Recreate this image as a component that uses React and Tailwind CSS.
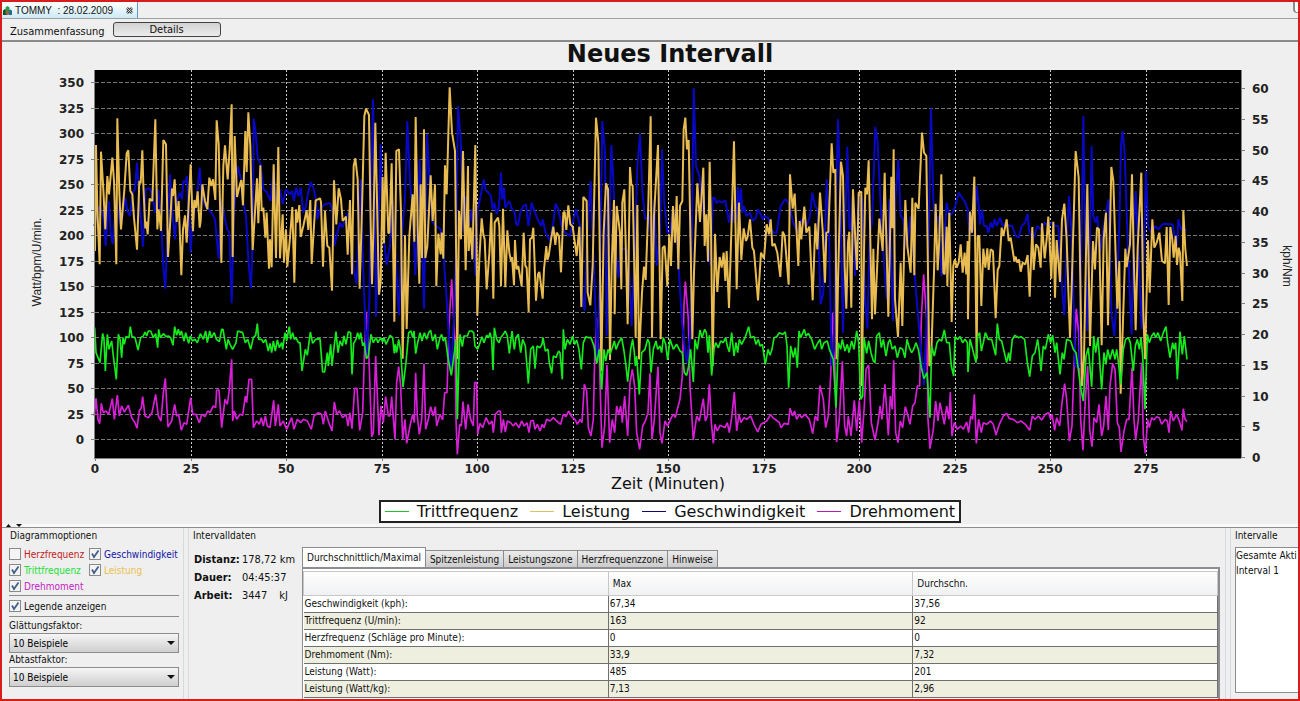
import { useState } from "react";

// Samples are stored in thirds of a pixel: [x offset, "x,y x,y ..."]
const cadence = [
  [0, "14,785 18,860 30,890 38,802 42,820 46,915 52,805 57,850 65,825 70,870 79,940 85,805 90,820 95,875 99,815 103,835 108,812 117,815 121,782 126,812 135,815 144,852 152,815 160,810 165,798 170,810 175,795 182,795 190,815 197,803 203,845 206,790 211,815 220,803 228,812 235,810 242,815 249,838 254,782 260,808 265,790 270,808 274,795 282,825 287,800 296,832 301,810 307,825 315,820 322,830 331,803 340,820 347,795 352,830 359,795 364,815 373,800 379,820 388,827 395,790 399,790 409,850 414,820 420,835 428,850 438,830 443,795 458,800 466,830 473,820 482,850 490,815 497,808 502,773 506,820 515,820 520,830 527,820 535,855 540,832 545,860 550,825 556,855 562,822 568,845 575,830 578,850 585,800 590,825 595,795 598,782 602,820 608,800 613,820 618,815 625,830 630,830 636,915 646,850 652,868 661,798 668,832 677,820 690,818 698,918 704,918 712,860 715,900 722,835 726,900 732,845 738,797 744,860 750,825 757,840 762,810 768,835 775,797 782,800 786,925 791,832 798,820 803,800 808,820 812,800 818,840 823,830 829,878 835,870 843,805 850,830 858,815 864,830 872,815 878,828 882,815 888,835"],
  [870, "30,808 38,815 43,862 46,835 50,860 56,820 62,855 69,963 78,890 86,800 93,795 98,815 102,795 107,863 113,830 120,800 126,825 133,800 140,820 146,800 152,793 158,825 166,805 172,850 180,815 185,805 190,825 196,815 203,870 214,928 223,860 228,820 232,1060 238,840 240,805 247,842 252,810 262,810 268,795 275,795 281,800 285,840 293,850 300,830 306,812 312,830 320,808 326,815 330,800 335,820 339,912 343,785 350,820 357,830 362,815 370,805 376,795 382,810 388,862 396,795 403,850 408,815 415,805 422,860 428,820 436,840 445,952 452,850 460,840 465,908 471,840 480,845 486,835 489,815 496,855 504,850 508,890 515,922 520,870 528,875 536,855 540,860 547,940 550,790 555,850 562,820 570,835 578,810 584,835 590,822 597,850 604,910 610,830 618,812 625,815 633,815 642,840 650,893 658,850 665,970 672,850 677,885 684,850 690,865 697,845 703,825 708,850 716,830 725,815 732,855 738,900 743,947 752,850 758,820 763,860 766,900 770,870 778,985 785,860 795,850 803,820 808,830 813,920 820,850 828,825 833,850 840,840 845,860 850,815 857,835 863,882"],
  [1740, "0,820 10,850 20,835 30,855 37,860 43,920 50,928 56,900 62,850 70,948 75,820 82,850 90,792 96,815 104,790 109,800 114,860 118,808 125,928 132,850 137,830 145,845 152,825 160,830 167,815 172,840 178,858 185,800 192,870 198,830 203,860 208,820 215,835 225,815 236,782 242,815 252,812 258,835 265,820 270,840 277,835 286,895 294,850 300,868 306,850 312,815 320,812 328,800 338,805 346,798 351,840 356,965 362,840 370,875 376,845 382,905 387,795 392,815 403,790 408,810 415,802 425,820 434,850 441,835 450,820 455,850 462,830 472,825 478,850 490,880 498,1025 505,830 512,850 517,820 525,855 532,835 537,860 545,825 552,850 560,795 566,830 572,1000 578,990 582,815 590,862 596,825 603,860 610,885 615,890 620,810 628,800 634,845 640,820 648,870 655,830 660,820 667,850 675,840 682,875 690,845 698,850 705,875 711,820 718,845 725,860 731,850 738,830 745,850 754,905 762,938 771,920 780,1055 785,840 793,870 801,830 808,820 815,825 823,792 830,830 838,830 844,900 851,930 855,812 863,820 870,812 878,830 885,820 892,830"],
  [2580, "54,918 60,820 68,850 78,890 83,810 89,800 94,855 100,830 106,800 115,820 125,820 137,868 142,773 148,820 155,825 162,855 170,890 176,860 180,885 187,820 195,808 205,815 213,812 224,820 232,890 239,932 247,870 255,860 263,820 267,850 273,915 280,840 286,850 295,805 302,830 308,808 315,860 320,830 330,925 337,860 342,880 350,820 362,825 370,850 378,860 385,910 393,970 400,1005 408,870 415,845 425,962 431,810 437,860 444,815 448,870 455,970 462,860 468,895 473,850 480,880 488,850 495,880 500,850 505,885 512,955 520,850 527,820 535,815 541,830 550,915 556,840 562,820 568,850 573,815 578,870 585,1030 592,805 598,830 605,810 612,800 617,815 624,800 632,825 640,800 648,782 653,830 660,875 668,830 672,850 677,830 682,940 690,797 697,865 703,810 711,880"],
];

const power = [
  [0, "15,555 18,237 22,430 29,595 33,257 40,370 46,490 52,330 57,385 67,275 72,345 79,595 82,157 88,380 93,490 103,372 110,262 115,253 121,375 127,385 132,455 141,551 148,345 152,352 157,253 160,357 166,487 169,467 173,505 179,398 187,405 196,160 202,490 206,430 213,495 220,222 228,235 234,573 240,480 246,368 249,390 254,340 260,468 266,405 274,628 279,490 285,448 290,530 297,395 302,295 309,496 313,402 318,425 323,376 329,485 332,465 337,355 345,405 352,430 358,335 364,360 369,340 376,402 380,163 386,235 394,591 400,300 405,238 413,340 419,250 425,115 428,573 434,210 441,393 450,355 454,342 459,418 466,195 470,318 475,139 481,240 488,552 494,455 501,337 505,472 511,298 515,435 520,425 526,515 530,440 537,608 540,520 545,604 551,295 558,576 565,243 570,577 578,445 582,590 588,490 592,602 600,515 607,423 613,650 618,430 622,470 628,417 632,513 640,480 650,433 655,492 661,402 665,594 672,480 677,403 690,397 693,408 699,602 705,435 712,540 718,545 726,674 732,343 739,475 746,367 753,400 758,465 768,452 773,566 780,402 786,625 791,300 796,277 803,340 809,668 816,430 823,150 828,128 837,147 841,420 846,655 850,500 856,170 862,450 867,686 872,650 878,333 882,532 887,260 895,502"],
  [870, "28,500 35,292 43,767 49,255 57,250 63,440 68,878 75,508 80,789 88,510 98,385 103,527 107,153 113,480 118,653 122,355 126,576 132,190 136,576 142,540 152,328 158,465 165,355 169,661 175,503 182,565 185,500 190,578 195,298 200,385 209,64 216,200 225,255 232,880 237,435 243,520 249,255 257,613 264,300 266,555 272,485 277,580 286,237 292,749 298,580 305,457 310,505 314,520 320,670 328,563 334,440 340,698 344,470 354,455 358,480 363,661 369,428 376,664 382,493 388,560 393,585 396,573 402,658 405,522 410,610 415,600 425,661 431,500 436,600 440,605 446,738 450,520 456,515 460,485 468,704 474,625 478,618 488,698 492,610 499,540 502,582 506,570 514,515 520,482 526,537 530,500 537,510 543,619 550,440 554,438 559,492 565,418 571,475 578,482 590,570 598,482 604,723 610,393 620,405 623,680 631,718 638,600 648,155 655,230 664,915 671,500 678,352 684,370 690,882 695,600 702,402 704,745 710,420 720,500 724,670 727,410 733,370 743,775 750,303 754,355 758,360 767,815 772,417 777,880 786,680 792,602 797,642 804,450 812,151 816,815 822,450 834,237 842,820 848,545 854,540 862,660 868,505"],
  [1740, "3,600 9,420 15,530 20,390 25,610 30,420 37,405 41,190 46,155 51,250 56,222 67,820 72,620 82,352 90,468 100,305 104,540 109,445 114,585 119,287 123,480 128,900 135,503 142,678 149,573 155,605 161,560 166,645 170,555 177,726 184,500 192,226 200,670 207,410 214,582 221,487 228,525 233,512 240,460 247,545 252,555 264,703 273,560 282,578 290,475 297,505 302,460 307,540 314,533 322,560 331,633 338,497 344,510 356,656 360,325 368,428 374,383 385,600 389,465 394,520 403,422 409,500 418,482 428,703 436,472 442,550 450,380 458,492 465,650 469,500 475,498 485,232 490,320 496,310 500,880 504,650 513,287 519,330 524,600 529,728 534,530 538,497 544,725 549,370 556,520 561,612 566,380 574,377 575,960 582,560 586,365 591,385 596,283 606,760 610,548 615,745 628,458 638,555 644,320 655,752 664,332 667,487 671,250 675,700 684,813 692,590 697,780 706,402 712,540 722,620 727,395 733,628 736,410 746,428 756,200 762,260 769,270 778,900 783,890 792,620 797,413 803,613 808,520 814,325 820,620 824,625 830,482 832,660 838,440 845,768 850,600 855,580 860,605 866,590 872,535 878,620 884,560 889,625 893,525"],
  [2580, "54,760 60,437 66,500 73,332 80,880 83,510 88,510 94,720 100,548 106,605 112,547 116,612 122,550 129,555 137,757 143,612 148,600 155,485 160,510 164,490 170,460 176,525 182,515 193,585 197,572 202,590 207,580 212,617 218,590 226,595 233,567 239,692 247,483 251,612 258,535 265,545 272,605 276,472 284,577 290,520 295,452 304,638 310,467 315,695 320,522 330,648 336,460 343,413 350,520 360,815 366,630 377,255 386,335 396,960 402,880 412,355 420,840 429,525 435,610 441,485 447,490 455,838 461,520 468,440 474,778 484,303 490,345 502,728 508,585 512,983 526,548 530,603 540,535 546,325 551,560 557,793 563,545 574,320 580,740 585,880 594,523 599,680 607,460 613,545 620,530 628,500 636,585 645,592 650,483 656,717 661,483 667,520 671,575 677,510 681,597 686,545 690,560 697,705 700,433 706,550 711,600"],
];

const speed = [
  [0, "13,480 28,420 40,450 47,540 57,405 62,500 68,535 78,400 92,480 106,395 112,435 120,450 128,380 135,370 141,290 150,430 159,542 167,370 178,367 185,380 196,440 205,370 214,480 220,600 226,668 232,500 240,325 247,440 255,520 262,400 270,380 276,400 280,345 286,350 291,330 296,430 302,560 308,460 320,400 329,305 334,375 345,420 354,428 368,445 375,460 386,578 395,400 404,455 412,490 418,500 425,712 432,440 443,300 452,335 458,400 468,450 475,580 483,667 489,500 491,158 497,200 503,275 512,295 520,370 530,378 542,405 550,320 560,410 570,370 578,415 588,370 600,385 606,375 612,405 618,365 626,390 632,365 640,440 648,420 655,378 662,348 670,365 677,395 682,460 692,425 705,415 720,411 727,430 733,540 742,500 750,470 757,485 766,460 775,440 782,480 790,600 800,655 806,500 812,340 818,560 830,875 838,700 843,400 849,100 852,250 858,752 865,480 872,235 878,480 890,597"],
  [870, "30,540 38,400 48,600 57,748 66,500 75,400 82,165 90,350 98,430 106,628 112,480 119,280 124,450 132,728 136,500 141,205 148,330 157,467 168,480 182,490 190,560 200,700 213,920 222,760 228,550 234,120 242,220 252,500 258,390 266,480 275,430 280,500 287,630 293,430 300,400 311,340 317,372 325,380 333,390 338,430 343,410 350,445 357,420 363,320 367,400 372,365 376,425 388,405 395,428 404,440 409,475 414,478 422,435 430,420 438,415 445,480 455,410 465,440 475,465 484,480 488,460 497,500 510,525 520,470 527,413 535,430 545,480 555,500 570,510 578,470 588,430 600,480 607,690 614,735 622,500 632,345 640,560 652,880 660,600 667,165 675,260 680,810 688,500 694,237 700,340 707,560 716,635 722,550 735,550 745,560 755,780 765,550 772,300 780,205 787,370 795,460 808,450 816,550 823,400 830,600 840,500 846,250 852,400 862,500"],
  [1740, "0,500 10,430 20,500 27,620 36,770 50,890 60,810 66,500 71,66 78,300 88,330 95,400 105,480 115,540 122,600 128,395 134,395 139,412 146,405 155,410 166,403 177,470 185,420 193,470 200,450 203,362 208,420 213,368 217,440 222,420 229,450 240,440 248,465 258,455 263,430 270,440 278,460 285,450 296,458 300,480 310,500 320,500 332,420 345,400 355,410 370,470 383,500 395,460 410,480 420,450 427,380 435,420 443,430 452,715 460,680 470,340 477,500 485,900 492,850 498,400 504,160 510,340 519,800 525,500 532,242 538,490 543,490 548,390 555,630 563,500 570,390 577,400 585,700 592,788 600,500 606,470 616,183 623,230 630,380 640,560 650,700 658,400 669,765 676,400 685,280 692,450 700,460 710,550 722,450 733,610 744,750 762,958 772,700 778,400 783,127 790,400 797,470 805,450 815,630 823,520 830,410 838,450 848,440 856,420 866,380 876,395 886,410 893,430"],
  [2580, "58,500 66,500 73,480 80,360 86,420 90,475 96,430 102,480 110,480 115,500 122,470 128,485 134,460 140,480 150,455 158,480 168,470 178,480 187,480 197,510 206,515 215,480 225,470 233,443 238,500 250,520 262,480 272,490 285,470 295,480 305,470 315,480 325,480 335,650 343,748 350,540 357,390 365,500 376,900 388,905 395,500 400,150 405,480 412,795 419,560 425,240 430,450 437,470 442,450 450,560 460,490 468,440 476,400 484,740 493,810 500,700 508,480 513,240 518,195 524,260 530,440 540,700 545,805 551,500 557,375 563,500 575,790 581,560 588,315 594,480 605,500 615,480 625,490 640,473 658,475 668,475 672,500 681,540 685,460 690,480 700,500 709,490"],
];

const torque = [
  [0, "13,1050 18,997 24,1060 29,1073 34,1012 40,1040 48,1035 56,1045 67,998 73,1060 82,987 88,1050 95,1020 103,1038 115,1018 125,1055 135,1070 141,1087 148,1035 154,1025 158,992 165,1050 175,1055 186,1040 197,985 205,1050 213,1065 220,980 226,937 234,1083 245,1065 254,1015 260,1050 266,1045 274,1093 282,1070 290,1075 302,995 308,1045 318,1045 328,1070 335,1045 345,1052 353,1035 360,1040 370,1020 377,1025 380,972 387,972 395,1085 405,1000 412,1015 418,970 425,880 428,1065 433,1035 440,1060 450,1045 458,1048 466,990 470,1010 477,940 485,940 490,1085 500,1065 508,1075 514,1055 520,1080 526,1050 532,1080 540,1085 551,1003 556,1080 565,1015 570,1080 580,1065 590,1090 605,1055 612,1090 622,1060 632,1070 640,1060 652,1065 664,1090 672,1050 685,1040 695,1045 700,1075 706,1035 715,1065 726,1095 733,1008 740,1045 748,1035 758,1055 768,1045 774,1080 780,1040 786,1088 794,967 801,967 809,1093 818,1040 823,870 829,737 837,880 845,1112 850,1100 857,870 867,1108 873,1020 880,1070 887,992 895,1050"],
  [870, "30,1050 35,992 45,1120 50,950 56,902 62,960 68,1120 75,1060 80,1132 90,1080 98,1045 103,1070 107,920 112,1050 118,1105 125,1060 132,893 137,1090 145,1060 152,1022 160,1050 166,1022 170,1080 180,1045 188,1062 194,980 201,980 207,780 215,640 225,830 228,1060 232,1165 239,1075 244,1080 249,1007 257,1090 264,1015 272,1060 280,1080 284,950 290,950 293,1105 300,1072 308,1085 318,1055 328,1075 336,1065 340,1100 346,1045 355,1035 361,1035 364,1100 370,1060 376,1098 382,1065 392,1070 400,1080 407,1070 417,1085 425,1065 433,1080 441,1070 447,1100 452,1065 460,1063 465,1090 472,1075 480,1095 487,1075 492,1085 500,1060 510,1065 520,1055 530,1065 542,1075 550,1045 558,1052 566,1035 575,1052 585,1060 592,1075 600,1060 606,1070 613,955 620,975 625,1085 633,1110 640,1060 644,880 650,755 658,880 666,1145 674,1080 681,897 689,1130 697,1060 704,1100 710,1020 716,1045 722,1020 727,1070 734,990 743,1110 750,950 757,910 764,960 770,1100 779,1150 788,1080 796,1065 804,1040 810,922 816,1120 823,1060 834,902 840,1100 846,1132 855,1065 863,1080"],
  [1740, "4,1055 10,1045 16,1055 22,1030 30,1000 37,930 42,720 46,647 55,760 60,960 70,1122 80,1050 88,1065 94,1030 100,998 106,1065 112,1050 118,955 124,1070 130,1132 135,1075 142,1095 150,1078 165,1085 172,1070 178,1100 185,1055 193,978 200,1095 207,1045 213,1070 222,1055 230,1060 242,1050 252,1075 263,1098 273,1075 290,1065 302,1045 308,1055 318,1062 328,1070 333,1085 343,1072 355,1075 360,1027 368,1050 374,1035 380,1060 388,1045 395,1055 405,1045 418,1060 428,1103 436,1050 443,1065 450,958 460,1000 467,1085 475,1050 482,930 488,740 494,860 500,1128 508,1060 517,886 524,1080 530,1110 535,1050 543,1110 553,1003 560,1095 568,1003 575,1130 583,1020 588,910 596,897 604,1070 615,1122 625,1065 630,1020 636,1060 645,955 655,1108 661,990 667,1030 671,883 677,1100 684,1130 691,1065 698,1085 706,1022 714,1050 720,1075 728,1020 735,1010 742,960 749,960 754,760 761,625 770,760 774,1060 780,1148 790,1090 797,1005 804,1065 810,1010 817,1045 823,1075 830,1020 837,1060 841,978 846,1110 853,1070 862,1090 872,1080 880,1090 890,1068"],
  [2580, "56,1100 62,1050 68,1060 73,985 79,1132 86,1060 94,1100 100,1070 110,1075 122,1065 130,1075 138,1107 148,1075 160,1050 170,1042 178,1058 190,1060 202,1070 213,1065 226,1075 239,1093 247,1050 255,1060 265,1050 275,1062 286,1045 296,1040 302,1060 306,1045 314,1093 320,1055 329,1080 336,1010 344,953 350,1000 358,1125 366,1080 370,960 379,728 386,800 392,1060 399,1153 406,1000 413,900 419,1090 426,1142 432,1055 440,1070 447,1015 455,1110 461,1080 468,990 475,1092 480,960 488,893 495,910 502,1070 508,1085 513,1158 522,1095 530,1060 537,1060 546,905 552,1060 557,1120 565,1060 575,890 580,1110 586,1162 593,1060 598,1085 605,1055 612,1062 620,1052 628,1055 635,1075 646,1060 652,1065 657,1100 662,1035 670,1065 680,1045 688,1065 696,1093 700,1028 705,1060 711,1067"],
];

// Painted in this order, so cadence ends up on top
const series = [
  { key: "torque", color: "#d81fd8", width: 5, data: torque },
  { key: "speed", color: "#0808c4", width: 6, data: speed },
  { key: "power", color: "#e8bc50", width: 6, data: power },
  { key: "cadence", color: "#14ea1c", width: 5, data: cadence },
];

const legend = [
  { key: "cadence", label: "Trittfrequenz", line: "bg-[#1fc42c]" },
  { key: "power", label: "Leistung", line: "bg-[#e2c060]" },
  { key: "speed", label: "Geschwindigkeit", line: "bg-[#0a0a70]" },
  { key: "torque", label: "Drehmoment", line: "bg-[#b81cb8]" },
];

const leftTicks = [350, 325, 300, 275, 250, 225, 200, 175, 150, 125, 100, 75, 50, 25, 0];
const rightTicks = [60, 55, 50, 45, 40, 35, 30, 25, 20, 15, 10, 5, 0];
const timeTicks = [0, 25, 50, 75, 100, 125, 150, 175, 200, 225, 250, 275];

const leftY = (v) => Math.round(373 - (v * 357) / 350);
const rightY = (v) => Math.round(391 - (v * 369) / 60);
const timeX = (v) => Math.round(93 + (v * 1051) / 275);

const toPoints = (segments) =>
  segments
    .flatMap(([offset, text]) =>
      text.split(" ").map((pair) => {
        const [x, y] = pair.split(",").map(Number);
        return `${x + offset},${y}`;
      })
    )
    .join(" ");

const rows = [
  ["Geschwindigkeit (kph):", "67,34", "37,56"],
  ["Trittfrequenz (U/min):", "163", "92"],
  ["Herzfrequenz (Schläge pro Minute):", "0", "0"],
  ["Drehmoment (Nm):", "33,9", "7,32"],
  ["Leistung (Watt):", "485", "201"],
  ["Leistung (Watt/kg):", "7,13", "2,96"],
];

const tabs = [
  "Durchschnittlich/Maximal",
  "Spitzenleistung",
  "Leistungszone",
  "Herzfrequenzzone",
  "Hinweise",
];

function Chart({ visible }) {
  return (
    <svg
      viewBox="0 0 1296 426"
      className="block w-full h-auto"
      role="img"
      aria-label="Neues Intervall"
    >
      <rect x="92" y="4" width="1147" height="388" fill="#000" />

      {/* Grid */}
      <g stroke="#c8c8c8" strokeOpacity="0.6" shapeRendering="crispEdges">
        {leftTicks.map((v) => (
          <line key={v} x1="93" x2="1238" y1={leftY(v)} y2={leftY(v)} strokeDasharray="4 2" />
        ))}
        {timeTicks.slice(1).map((v) => (
          <line key={v} x1={timeX(v)} x2={timeX(v)} y1="4" y2="392" strokeDasharray="2 2" stroke="#fff" strokeOpacity="0.8" />
        ))}
      </g>

      {/* Series */}
      <g transform="translate(88 0) scale(0.33333)" fill="none" strokeLinejoin="bevel">
        {series
          .filter((s) => visible[s.key])
          .map((s) => (
            <polyline key={s.key} points={toPoints(s.data)} stroke={s.color} strokeWidth={s.width} />
          ))}
      </g>

      {/* Axes */}
      <g stroke="#808080" shapeRendering="crispEdges">
        <line x1="92" x2="92" y1="4" y2="392" />
        <line x1="1239" x2="1239" y1="4" y2="392" />
        <line x1="92" x2="1239" y1="392" y2="392" />
        {leftTicks.map((v) => (
          <line key={v} x1="89" x2="92" y1={leftY(v)} y2={leftY(v)} />
        ))}
        {rightTicks.map((v) => (
          <line key={v} x1="1239" x2="1243" y1={rightY(v)} y2={rightY(v)} />
        ))}
        {timeTicks.map((v) => (
          <line key={v} x1={timeX(v)} x2={timeX(v)} y1="392" y2="395" />
        ))}
      </g>

      <g className="font-['DejaVu_Sans',sans-serif] text-[12px] font-bold" fill="#222">
        {leftTicks.map((v) => (
          <text key={v} x="82" y={leftY(v) + 5} textAnchor="end">
            {v}
          </text>
        ))}
        {rightTicks.map((v) => (
          <text key={v} x="1250" y={rightY(v) + 5}>
            {v}
          </text>
        ))}
        {timeTicks.map((v) => (
          <text key={v} x={timeX(v)} y="407" textAnchor="middle">
            {v}
          </text>
        ))}
      </g>

      <text
        x="666"
        y="423"
        textAnchor="middle"
        fill="#111"
        className="font-['DejaVu_Sans',sans-serif] text-[16px]"
      >
        Zeit (Minuten)
      </text>
      <g
        fill="#222"
        textAnchor="middle"
        className="font-['Liberation_Sans',sans-serif] text-[12px]"
      >
        <text transform="translate(39 196) rotate(-90)">Watt/bpm/U/min.</text>
        <text transform="translate(1281 200) rotate(90)">kph/Nm</text>
      </g>
    </svg>
  );
}

function Check({ label, color, checked, onChange }) {
  return (
    <label className={`flex items-center gap-[3px] h-4 whitespace-nowrap ${color}`}>
      <span className="relative block size-3 shrink-0">
        <input
          type="checkbox"
          checked={checked}
          onChange={onChange}
          className="block size-3 appearance-none border border-[#8a8a8a] bg-[#f4f4f4]"
        />
        {checked && (
          <svg viewBox="0 0 12 12" className="absolute inset-0 size-3 pointer-events-none">
            <path d="M3 5.5 L5 9 L9.5 2.5" fill="none" stroke="#44608f" strokeWidth="1.8" />
          </svg>
        )}
      </span>
      {label}
    </label>
  );
}

function Factor({ id, label }) {
  return (
    <div>
      <label htmlFor={id} className="block h-[14px] leading-[14px]">
        {label}
      </label>
      <div className="relative">
        <select
          id={id}
          className="block w-full h-5 appearance-none border border-[#8c8c8c] bg-linear-to-b from-[#f5f5f5] to-[#cfcfcf] px-[3px] text-black"
        >
          <option>10 Beispiele</option>
        </select>
        <svg viewBox="0 0 8 4" className="absolute right-1 top-2 h-1 w-2 pointer-events-none">
          <path d="M0 0h8L4 4z" fill="#111" />
        </svg>
      </div>
    </div>
  );
}

export default function App() {
  const [tab, setTab] = useState(0);
  const [heart, setHeart] = useState(false);
  const [showLegend, setShowLegend] = useState(true);
  const [visible, setVisible] = useState({
    cadence: true,
    power: true,
    speed: true,
    torque: true,
  });

  const toggle = (key) => setVisible((prev) => ({ ...prev, [key]: !prev[key] }));

  return (
    <div className="min-h-screen flex flex-col overflow-hidden border-2 border-[#d81c1c] bg-[#efefef] text-[#111] font-['DejaVu_Sans_Condensed','DejaVu_Sans',sans-serif] text-[10px]">
      {/* Document tabs */}
      <header className="flex h-[17px] items-start justify-between border-b border-[#a0a0a0]">
        <div className="flex h-4 w-[136px] items-center border-r border-[#5b9bc8] bg-linear-to-b from-white to-[#cdeaf7] pl-px font-['Liberation_Sans',sans-serif] text-[10px]">
          <svg viewBox="0 0 9 9" className="mr-[3px] size-[9px]">
            <path d="M0 4.5L2 3l2 1.5V9H0z" fill="#14502c" />
            <path d="M2.5 1.5L4.5 0l2 1.5V8h-4z" fill="#2a9a46" />
            <path d="M5.5 4.5L7.2 3.5 9 4.5V9H5.5z" fill="#2b6c8c" />
            <path d="M3.5 5h2v4h-2z" fill="#b85a3a" />
          </svg>
          <span className="whitespace-pre">TOMMY  : 28.02.2009</span>
          <button type="button" aria-label="Schließen" className="ml-auto mr-1">
            <svg viewBox="0 0 7 7" className="size-[7px]">
              <path d="M1 1l5 5M6 1L1 6" stroke="#444" strokeWidth="2.6" />
              <path d="M1 1l5 5M6 1L1 6" stroke="#eee" strokeWidth="0.8" />
            </svg>
          </button>
        </div>
        <div className="h-[11px] w-[5px] rounded-bl-sm border-b border-l-2 border-[#8c8c8c] bg-white" />
      </header>

      {/* View switch */}
      <nav className="flex h-[23px] items-center gap-2 border-b-2 border-[#8a8a8a] pl-2 text-[11px]">
        <button type="button" className="self-end">
          Zusammenfassung
        </button>
        <button
          type="button"
          className="h-[15px] w-[108px] rounded-[3px] border border-[#444] bg-linear-to-b from-[#d2d2d2] to-[#ececec] leading-[14px]"
        >
          Details
        </button>
      </nav>

      <main className="pb-px">
        <h1 className="h-6 pl-10 text-center font-['DejaVu_Sans',sans-serif] text-[24px] font-bold leading-6">
          Neues Intervall
        </h1>
        <Chart visible={visible} />
        <div className="flex h-[31px] items-end justify-center pl-10">
          {showLegend && (
            <ul className="flex h-[23px] items-center gap-3 border-2 border-[#222] bg-white px-1 font-['DejaVu_Sans',sans-serif] text-[16px]">
              {legend.map((item) => (
                <li key={item.key} className="flex items-center gap-2">
                  <span className={`h-px w-6 ${item.line}`} />
                  {item.label}
                </li>
              ))}
            </ul>
          )}
        </div>
      </main>

      {/* Splitter */}
      <div className="h-1 border-b border-[#8c8c8c] bg-[#f8f8f8]">
        <svg viewBox="0 0 16 3" className="ml-1 h-[3px] w-4">
          <path d="M0 3h5L2.5 0zM10 0h6L13 3z" fill="#111" />
        </svg>
      </div>

      <div className="flex flex-1">
        <section className="w-[182px] shrink-0 border-r border-[#d5dadd] pl-[7px] pr-1 pt-px">
          <h2 className="h-[14px] pl-px leading-[14px]">Diagrammoptionen</h2>
          <div className="grid grid-cols-[80px_1fr] pt-[3px]">
            <Check label="Herzfrequenz" color="text-[#c41c24]" checked={heart} onChange={() => setHeart(!heart)} />
            <Check label="Geschwindigkeit" color="text-[#1414a8]" checked={visible.speed} onChange={() => toggle("speed")} />
            <Check label="Trittfrequenz" color="text-[#22e03a]" checked={visible.cadence} onChange={() => toggle("cadence")} />
            <Check label="Leistung" color="text-[#ecc050]" checked={visible.power} onChange={() => toggle("power")} />
            <Check label="Drehmoment" color="text-[#c41cc4]" checked={visible.torque} onChange={() => toggle("torque")} />
          </div>
          <div className="mt-px mb-0.5 border-y border-[#8c8c8c] py-0.5">
            <Check label="Legende anzeigen" color="text-[#111]" checked={showLegend} onChange={() => setShowLegend(!showLegend)} />
          </div>
          <Factor id="smoothing" label="Glättungsfaktor:" />
          <Factor id="sampling" label="Abtastfaktor:" />
        </section>

        <section className="flex min-w-0 flex-1 flex-col border-l border-r border-[#d5dadd] ml-1 pt-px pl-1">
          <h2 className="h-[14px] leading-[14px]">Intervalldaten</h2>
          <div className="flex flex-1">
            <dl className="grid w-[109px] shrink-0 grid-cols-[48px_1fr] content-start pt-2 pl-px text-[11px] leading-[18px] whitespace-nowrap">
              <dt className="font-bold">Distanz:</dt>
              <dd>178,72 km</dd>
              <dt className="font-bold">Dauer:</dt>
              <dd>04:45:37</dd>
              <dt className="font-bold">Arbeit:</dt>
              <dd className="flex gap-3">
                <span>3447</span>
                <span>kJ</span>
              </dd>
            </dl>

            <div className="mr-[5px] flex min-w-0 flex-1 flex-col pt-1">
              <div role="tablist" className="flex h-5 items-end">
                {tabs.map((name, i) => (
                  <button
                    key={name}
                    type="button"
                    role="tab"
                    aria-selected={tab === i}
                    onClick={() => setTab(i)}
                    className={
                      tab === i
                        ? "h-5 border border-b-0 border-[#8c8c8c] bg-white px-1"
                        : "h-[17px] border border-b-0 border-l-0 border-[#8c8c8c] bg-linear-to-b from-[#ececec] to-[#cccccc] px-1"
                    }
                  >
                    {name}
                  </button>
                ))}
              </div>
              <div className="flex-1 border-t-2 border-r-2 border-l border-[#8c8c92] bg-white pt-0.5">
                <table className="w-full table-fixed border-collapse text-left">
                  <thead>
                    <tr className="h-6 bg-linear-to-b from-white to-[#eff0f2]">
                      <th className="border border-[#c8c8c8] font-normal" aria-label="Wert" />
                      <th className="border border-[#c8c8c8] px-1 font-normal">Max</th>
                      <th className="border border-[#c8c8c8] px-1 font-normal">Durchschn.</th>
                    </tr>
                  </thead>
                  <tbody>
                    {rows.map((row) => (
                      <tr key={row[0]} className="h-[17px] border-b border-[#707070] even:bg-[#efefe0]">
                        {row.map((cell, i) => (
                          <td key={i} className="border-r border-[#707070] p-0 pl-px leading-4">
                            {cell}
                          </td>
                        ))}
                      </tr>
                    ))}
                  </tbody>
                </table>
              </div>
            </div>
          </div>
        </section>

        <section className="ml-1 flex w-[68px] shrink-0 flex-col border-l border-[#d5dadd] pl-1 pt-px pb-1.5">
          <h2 className="h-[14px] leading-[14px]">Intervalle</h2>
          <ul className="mt-1 flex-1 whitespace-nowrap border border-r-0 border-[#8c8c8c] bg-white leading-[15px]">
            <li>Gesamte Akti</li>
            <li>Interval 1</li>
          </ul>
        </section>
      </div>
    </div>
  );
}
